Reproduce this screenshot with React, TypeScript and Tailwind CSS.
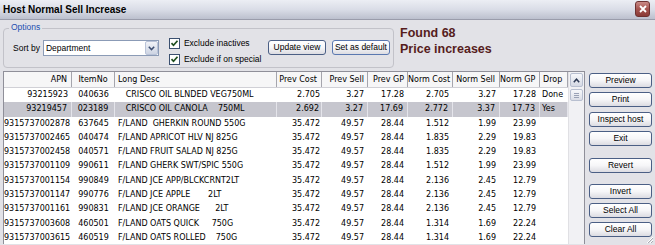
import React from "react";

const ui = "font-['Liberation_Sans',Arial,sans-serif]";
const grid =
  "grid grid-cols-[68px_43px_162px_45px_46px_40px_45px_47px_40px_28px]";

const columns = [
  { label: "APN", head: "text-right pr-[4px]", cell: "text-right pr-[4px]" },
  { label: "ItemNo", head: "text-center", cell: "text-center" },
  { label: "Long Desc", head: "text-left pl-[3px]", cell: "text-left pl-[3px]" },
  { label: "Prev Cost", head: "text-right pr-[4px]", cell: "text-right pr-[2px]" },
  { label: "Prev Sell", head: "text-right pr-[3px]", cell: "text-right pr-[4px]" },
  { label: "Prev GP", head: "text-right pr-[3px]", cell: "text-right pr-[4px]" },
  { label: "Norm Cost", head: "text-right pr-[4px]", cell: "text-right pr-[4px]" },
  { label: "Norm Sell", head: "text-right pr-[4px]", cell: "text-right pr-[4px]" },
  { label: "Norm GP", head: "text-right pr-[4px]", cell: "text-right pr-[4px]" },
  { label: "Drop", head: "text-left pl-[3px]", cell: "text-left pl-[2px]" },
];

const rows: string[][] = [
  ["93215923", "040636", "   CRISCO OIL BLNDED VEG750ML", "2.705", "3.27", "17.28", "2.705", "3.27", "17.28", "Done"],
  ["93219457", "023189", "   CRISCO OIL CANOLA    750ML", "2.692", "3.27", "17.69", "2.772", "3.37", "17.73", "Yes"],
  ["9315737002878", "637645", "F/LAND  GHERKIN ROUND 550G", "35.472", "49.57", "28.44", "1.512", "1.99", "23.99", ""],
  ["9315737002465", "040474", "F/LAND APRICOT HLV NJ 825G", "35.472", "49.57", "28.44", "1.835", "2.29", "19.83", ""],
  ["9315737002458", "040571", "F/LAND FRUIT SALAD NJ 825G", "35.472", "49.57", "28.44", "1.835", "2.29", "19.83", ""],
  ["9315737001109", "990611", "F/LAND GHERK SWT/SPIC 550G", "35.472", "49.57", "28.44", "1.512", "1.99", "23.99", ""],
  ["9315737001154", "990849", "F/LAND JCE APP/BLCKCRNT2LT", "35.472", "49.57", "28.44", "2.136", "2.45", "12.79", ""],
  ["9315737001147", "990776", "F/LAND JCE APPLE       2LT", "35.472", "49.57", "28.44", "2.136", "2.45", "12.79", ""],
  ["9315737001161", "990831", "F/LAND JCE ORANGE      2LT", "35.472", "49.57", "28.44", "2.136", "2.45", "12.79", ""],
  ["9315737003608", "460501", "F/LAND OATS QUICK     750G", "35.472", "49.57", "28.44", "1.314", "1.69", "22.24", ""],
  ["9315737003615", "460519", "F/LAND OATS ROLLED    750G", "35.472", "49.57", "28.44", "1.314", "1.69", "22.24", ""],
];

const btn = `${ui} h-[15px] rounded-[3px] border border-[#4b5f85] bg-gradient-to-b from-white via-[#f6f6f8] to-[#dcdce2] text-[8.5px] leading-none text-black flex items-center justify-center`;

const Check = ({ label }: { label: string }) => (
  <div className="flex items-center h-[11px]">
    <div className="w-[11px] h-[11px] border border-[#3b5070] bg-white flex items-center justify-center">
      <svg width="9" height="9" viewBox="0 0 9 9">
        <path d="M1.5 4.2 L3.5 6.3 L7.5 1.8" fill="none" stroke="#1f4f1f" strokeWidth="1.7" />
      </svg>
    </div>
    <span className="ml-[4px] text-[8.5px] leading-none text-black">{label}</span>
  </div>
);

export default function App() {
  return (
    <div className={`relative w-[655px] h-[245px] overflow-hidden bg-[#e2e2e7] ${ui}`}>
      {/* title bar */}
      <div className="h-[20px] flex items-center justify-between pl-[3px] pr-[5px] bg-gradient-to-b from-[#eceef4] via-[#dadde7] to-[#bcc0ce] border-b border-[#9a9cab]">
        <span className="text-[10px] font-bold text-black">Host Normal Sell Increase</span>
        <div className="w-[15px] h-[16px] mt-[-2px] rounded-[3px] border border-[#6d3232] bg-gradient-to-b from-[#c98a86] via-[#a55450] to-[#8a3a36] flex items-center justify-center">
          <svg width="10" height="10" viewBox="0 0 10 10">
            <path d="M2 2 L8 8 M8 2 L2 8" stroke="#fff" strokeWidth="1.8" />
          </svg>
        </div>
      </div>

      {/* options + result */}
      <div className="h-[51px] flex items-start">
        <div className="relative ml-[3px] mt-[8px] w-[391px] h-[40px] border border-[#c2c2c9] rounded-[4px] flex items-start pl-[9px]">
          <span className="absolute left-[5px] top-[-6px] px-[2px] bg-[#e2e2e7] text-[8.5px] leading-none text-[#1d4fb0]">
            Options
          </span>
          <div className="mt-[11px] flex items-center">
            <span className="text-[8.5px] text-black leading-none">Sort by</span>
            <div className="ml-[3px] w-[116px] h-[16px] border border-[#8b9bb6] bg-white flex items-center justify-between">
              <span className="pl-[2px] text-[8.5px] leading-none text-black">Department</span>
              <div className="w-[13px] h-[14px] mr-[0px] rounded-[2px] border border-[#b9c3d8] bg-gradient-to-b from-[#f1f3f8] to-[#cdd4e3] flex items-center justify-center">
                <svg width="7" height="5" viewBox="0 0 7 5">
                  <path d="M0.8 0.8 L3.5 3.6 L6.2 0.8" fill="none" stroke="#3d4f72" strokeWidth="1.5" />
                </svg>
              </div>
            </div>
          </div>
          <div className="ml-[10px] mt-[9px] w-[99px] flex flex-col gap-[5px]">
            <Check label="Exclude inactives" />
            <Check label="Exclude if on special" />
          </div>
          <div className={`${btn} mt-[11px] w-[58px]`}>Update view</div>
          <div className={`${btn} mt-[11px] ml-[6px] w-[58px] border-[#5a78b0]`}>Set as default</div>
        </div>
        <div className="ml-[6px] mt-[4.5px] text-[12.5px] leading-[16px] font-bold text-[#561d1d]">
          <div>Found 68</div>
          <div>Price increases</div>
        </div>
      </div>

      {/* list + buttons */}
      <div className="flex items-start">
        <div className="ml-[3px] w-[582px] h-[173px] flex border-l border-t border-r border-[#8f8f99] bg-white overflow-hidden">
          <div className="w-[564px] font-['DejaVu_Sans',sans-serif] text-[8px] text-black">
            <div className={`${grid} h-[16px] items-center bg-[#f6f6f7] border-b border-[#d0d0d6]`}>
              {columns.map((c, j) => (
                <div key={j} className={`${c.head} h-full leading-[15px] border-r border-[#a5a5ad] whitespace-nowrap overflow-hidden`}>
                  {c.label}
                </div>
              ))}
            </div>
            {rows.map((r, i) => {
              const sel = i === 1;
              return (
                <div key={i} className={`${grid} h-[14.3px] items-center ${sel ? "bg-[#c6c6ce]" : "bg-white"}`}>
                  {r.map((v, j) => (
                    <div
                      key={j}
                      className={`${columns[j].cell} h-full leading-[14.3px] whitespace-pre overflow-hidden ${sel ? "border-r border-[#e4e4ea]" : ""}`}
                    >
                      {v}
                    </div>
                  ))}
                </div>
              );
            })}
          </div>
          {/* scrollbar */}
          <div className="w-[16px] bg-[#f1f1f4] border-l border-[#e0e0e4] flex flex-col items-center pt-[1px]">
            <div className="w-[13px] h-[14px] rounded-[2px] border border-[#b8bfd0] bg-gradient-to-b from-[#f7f8fb] to-[#d5d9e4] flex items-center justify-center">
              <svg width="7" height="5" viewBox="0 0 7 5">
                <path d="M0.8 4.2 L3.5 1.2 L6.2 4.2" fill="none" stroke="#2e3a55" strokeWidth="1.5" />
              </svg>
            </div>
            <div className="mt-[2px] w-[13px] h-[12px] rounded-[2px] border border-[#b8bfd0] bg-gradient-to-b from-[#f7f8fb] to-[#dadde6] flex flex-col items-center justify-center gap-[1px]">
              <div className="w-[5px] h-px bg-[#9aa2b6]" />
              <div className="w-[5px] h-px bg-[#9aa2b6]" />
              <div className="w-[5px] h-px bg-[#9aa2b6]" />
            </div>
          </div>
        </div>

        <div className="ml-[4px] w-[63px] pt-[2px] flex flex-col">
          <div className={btn}>Preview</div>
          <div className={`${btn} mt-[4px]`}>Print</div>
          <div className={`${btn} mt-[5px]`}>Inspect host</div>
          <div className={`${btn} mt-[4px]`}>Exit</div>
          <div className={`${btn} mt-[12px]`}>Revert</div>
          <div className={`${btn} mt-[11px]`}>Invert</div>
          <div className={`${btn} mt-[4px]`}>Select All</div>
          <div className={`${btn} mt-[4px]`}>Clear All</div>
        </div>
      </div>

      {/* size grip */}
      <svg className="absolute right-[1px] bottom-[1px]" width="10" height="10" viewBox="0 0 10 10">
        <path d="M9 3 L3 9 M9 6 L6 9" stroke="#ffffff" strokeWidth="1" />
        <path d="M9 4 L4 9 M9 7 L7 9" stroke="#a9a9b2" strokeWidth="1" />
      </svg>
    </div>
  );
}
